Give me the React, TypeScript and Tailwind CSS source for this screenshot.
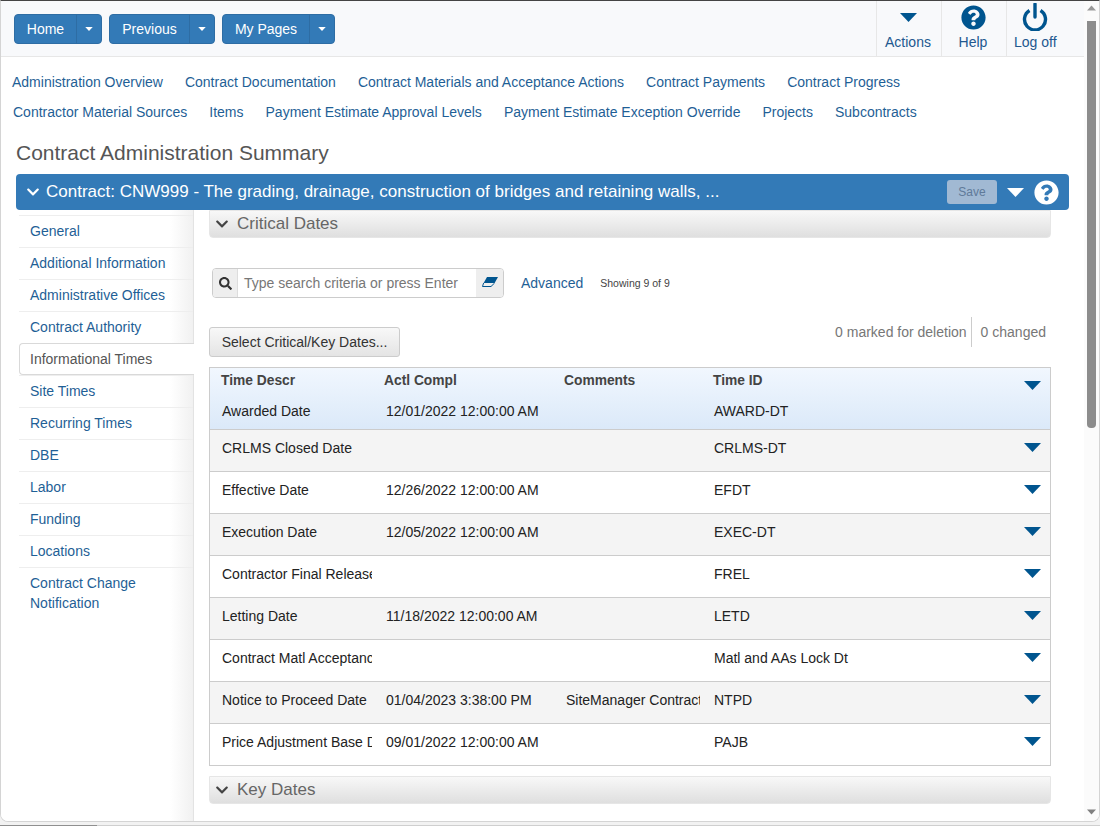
import React from "react";
import { FaChevronDown, FaQuestionCircle, FaSearch } from "react-icons/fa";

const navButtons = [
  { label: "Home", main: "w-[62px]" },
  { label: "Previous", main: "w-[80px]" },
  { label: "My Pages", main: "w-[87px]" },
];

const linkRows = [
  { cls: "pl-[11px]", links: ["Administration Overview", "Contract Documentation", "Contract Materials and Acceptance Actions", "Contract Payments", "Contract Progress"] },
  { cls: "pl-3", links: ["Contractor Material Sources", "Items", "Payment Estimate Approval Levels", "Payment Estimate Exception Override", "Projects", "Subcontracts"] },
];

const sideItems = [
  "General",
  "Additional Information",
  "Administrative Offices",
  "Contract Authority",
  "Informational Times",
  "Site Times",
  "Recurring Times",
  "DBE",
  "Labor",
  "Funding",
  "Locations",
  "Contract Change Notification",
];

const rows = [
  { descr: "CRLMS Closed Date", compl: "", comments: "", id: "CRLMS-DT" },
  { descr: "Effective Date", compl: "12/26/2022 12:00:00 AM", comments: "", id: "EFDT" },
  { descr: "Execution Date", compl: "12/05/2022 12:00:00 AM", comments: "", id: "EXEC-DT" },
  { descr: "Contractor Final Release Date", compl: "", comments: "", id: "FREL" },
  { descr: "Letting Date", compl: "11/18/2022 12:00:00 AM", comments: "", id: "LETD" },
  { descr: "Contract Matl Acceptance Lock", compl: "", comments: "", id: "Matl and AAs Lock Dt" },
  { descr: "Notice to Proceed Date", compl: "01/04/2023 3:38:00 PM", comments: "SiteManager Contract Activated", id: "NTPD" },
  { descr: "Price Adjustment Base Date", compl: "09/01/2022 12:00:00 AM", comments: "", id: "PAJB" },
];

const Caret = ({ className }: { className: string }) => (
  <svg viewBox="0 0 17 9" className={className} fill="currentColor">
    <path d="M0 0h17L8.5 9z" />
  </svg>
);

const SectionBar = ({ title }: { title: string }) => (
  <div className="flex h-7 items-center rounded-b-[4px] border border-[#e6e6e6] bg-gradient-to-b from-[#f8f8f8] to-[#dfdfdf] pl-[5px] text-[17px] text-[#666]">
    <FaChevronDown className="mr-[8px] h-[14px] w-[14px] text-[#444]" />
    {title}
  </div>
);

export default function App() {
  return (
    <div className="h-[826px] w-[1100px] overflow-hidden bg-[#f2f2f2] font-['Liberation_Sans',Arial,sans-serif] text-sm text-[#333]">
      <div className="flex h-[822px] flex-col overflow-hidden rounded-b-[8px] border-x border-b border-t border-[#d4d4d4] border-t-[#444] bg-white">
        <div className="flex min-h-0 flex-1">
          <div className="flex w-[1083px] flex-col">
            {/* top bar */}
            <div className="flex h-[56px] items-stretch justify-between border-b border-[#e7e7e7] bg-[#f8f9fb]">
              <div className="flex items-center gap-[7px] pl-[13px]">
                {navButtons.map((b) => (
                  <div key={b.label} className="flex h-[30px] rounded-[4px] border border-[#2e6da4] bg-[#337ab7] text-white">
                    <div className={`${b.main} flex items-center justify-center border-r border-[#2e6da4]`}>{b.label}</div>
                    <div className="flex w-6 items-center justify-center">
                      <Caret className="h-[4px] w-[8px]" />
                    </div>
                  </div>
                ))}
              </div>
              <div className="flex text-[#22588f]">
                <div className="flex w-[65px] flex-col items-center border-l border-[#e7e7e7] pr-[2px] pt-[12px]">
                  <Caret className="h-[9px] w-[17px] text-[#00558f]" />
                  <span className="mt-[10px]">Actions</span>
                </div>
                <div className="flex w-[65px] flex-col items-center border-l border-[#e7e7e7] pr-[2px] pt-[4px]">
                  <FaQuestionCircle className="h-[25px] w-[25px] text-[#00558f]" />
                  <span className="mt-[2px]">Help</span>
                </div>
                <div className="flex w-[78px] flex-col items-start border-l border-[#e7e7e7] pl-[7px] pt-[2px]">
                  <svg viewBox="0 0 26 28" className="ml-[8px] h-[28px] w-[26px] text-[#00558f]" fill="none" stroke="currentColor" strokeWidth="3.4">
                    <path d="M7.5 7.5a10.5 10.5 0 1 0 11 0" />
                    <path d="M13 1v13" strokeLinecap="round" />
                  </svg>
                  <span className="mt-[1px]">Log off</span>
                </div>
              </div>
            </div>

            {/* page links */}
            <div className="pt-[10px] text-[#1f5f96]">
              {linkRows.map((r) => (
                <div key={r.links[0]} className={`flex h-[30px] items-center gap-[22px] ${r.cls}`}>
                  {r.links.map((l) => (
                    <span key={l}>{l}</span>
                  ))}
                </div>
              ))}
            </div>

            <h1 className="pl-[15px] pt-[14px] text-[21px] leading-[24px] text-[#555]">Contract Administration Summary</h1>

            {/* contract bar */}
            <div className="ml-[15px] mt-[9px] flex h-9 w-[1053px] items-center rounded-[4px] bg-[#337ab7] pl-[10px] pr-[10px] text-white">
              <FaChevronDown className="mr-[6px] h-[14px] w-[14px]" />
              <span className="flex-1 text-[17px]">Contract: CNW999 - The grading, drainage, construction of bridges and retaining walls, ...</span>
              <div className="flex h-6 w-[50px] items-center justify-center rounded-[3px] bg-[#a1b9d3] text-xs text-[#5f7a99]">Save</div>
              <Caret className="ml-[10px] h-[9px] w-[17px]" />
              <FaQuestionCircle className="ml-[10px] h-[25px] w-[25px]" />
            </div>

            <div className="flex min-h-0 flex-1">
              {/* side menu */}
              <div className="w-[193px] shrink-0 border-r border-[#e3e3e3] bg-gradient-to-r from-white from-[88%] to-[#f1f1f1] pl-[18px] pt-[5px]">
                {sideItems.map((item) => {
                  const active = item === "Informational Times";
                  return active ? (
                    <div key={item} className="relative -mr-[1px] flex h-8 items-center rounded-l-[4px] border border-r-0 border-[#d9d9d9] bg-white pl-[10px] text-[#555]">
                      {item}
                    </div>
                  ) : (
                    <div key={item} className="border-t border-[#eeeeee] pb-[6px] pl-[11px] pr-4 pt-[5px] leading-5 text-[#1f5f96]">
                      {item}
                    </div>
                  );
                })}
              </div>

              {/* main panel */}
              <div className="w-[842px] shrink-0 pl-[15px] box-content">
                <SectionBar title="Critical Dates" />

                <div className="mt-[30px] flex h-[30px] items-center pl-[3px]">
                  <div className="flex h-[30px] w-[292px] overflow-hidden rounded-[4px] border border-[#ccc]">
                    <div className="flex w-[25px] items-center justify-center border-r border-[#ddd] bg-[#eee]">
                      <FaSearch className="h-[13px] w-[13px] text-[#333]" />
                    </div>
                    <div className="flex flex-1 items-center pl-[6px] text-[#777]">Type search criteria or press Enter</div>
                    <div className="flex w-[27px] items-center justify-center bg-[#eee] pb-[3px]">
                      <svg viewBox="0 0 16 10" className="h-[10px] w-[16px] text-[#00558f]">
                        <path d="M5 0h11l-3.4 6H1.6z" fill="currentColor" />
                        <path d="M1.6 6L0.5 9.5H9L12.6 6" fill="none" stroke="currentColor" strokeWidth="1" />
                      </svg>
                    </div>
                  </div>
                  <span className="ml-[17px] text-[#1f5f96]">Advanced</span>
                  <span className="ml-[17px] pt-[1px] text-[10.5px] text-[#444]">Showing 9 of 9</span>
                </div>

                <div className="mt-[19px] flex h-[40px] items-end justify-between">
                  <div className="flex h-[30px] w-[191px] items-center justify-center rounded-[3px] border border-[#ccc] bg-gradient-to-b from-[#f8f8f8] to-[#e4e4e4] text-[#333]">
                    Select Critical/Key Dates...
                  </div>
                  <div className="mb-[10px] flex h-[30px] items-center pr-[5px] text-[#777]">
                    <span>0 marked for deletion</span>
                    <span className="ml-[4px] mr-[5px] h-[30px] w-px bg-[#ccc]" />
                    <span className="pl-[4px]">0 changed</span>
                  </div>
                </div>

                <div className="mt-[10px] border border-[#ccc] text-[#222]">
                  <div className="relative h-[62px] border-b border-[#ccc] bg-gradient-to-b from-[#f1f7fe] to-[#dbe9f9]">
                    <div className="grid h-[27px] grid-cols-[162px_180px_148px_1fr] items-center pb-px text-[13.8px] font-bold text-[#444]">
                      <span className="pl-[11px]">Time Descr</span>
                      <span className="pl-3">Actl Compl</span>
                      <span className="pl-3">Comments</span>
                      <span className="pl-[13px]">Time ID</span>
                    </div>
                    <div className="grid h-[32px] grid-cols-[162px_180px_148px_1fr] items-center">
                      <span className="pl-3">Awarded Date</span>
                      <span className="pl-[14px]">12/01/2022 12:00:00 AM</span>
                      <span />
                      <span className="pl-[14px]">AWARD-DT</span>
                    </div>
                    <Caret className="absolute right-[9px] top-[13px] h-[9px] w-[17px] text-[#00558f]" />
                  </div>
                  {rows.map((r, i) => (
                    <div
                      key={r.id}
                      className={`grid grid-cols-[162px_180px_148px_1fr] items-start pt-[8px] ${i % 2 === 0 ? "bg-[#f4f4f4]" : "bg-white"} ${i < rows.length - 1 ? "h-[42px] border-b border-[#ccc]" : "h-[41px]"}`}
                    >
                      <span className="overflow-hidden whitespace-nowrap pl-3">{r.descr}</span>
                      <span className="pl-[14px]">{r.compl}</span>
                      <span className="overflow-hidden whitespace-nowrap pl-[14px]">{r.comments}</span>
                      <div className="flex items-start justify-between pl-[14px] pr-[9px]">
                        <span>{r.id}</span>
                        <Caret className="mt-[5px] h-[9px] w-[17px] text-[#00558f]" />
                      </div>
                    </div>
                  ))}
                </div>

                <div className="mt-[10px]">
                  <SectionBar title="Key Dates" />
                </div>
              </div>
            </div>
          </div>

          {/* scrollbar */}
          <div className="flex w-[15px] flex-col items-center bg-[#fbfbfb] pt-[4px] pb-[6px]">
            <Caret className="h-[6px] w-[9px] rotate-180 text-[#999]" />
            <div className="mt-[10px] h-[407px] w-[9px] rounded-b-[4px] bg-[#8c8c8c]" />
            <div className="flex-1" />
            <Caret className="h-[6px] w-[9px] text-[#808080]" />
          </div>
        </div>
      </div>
      <div className="mt-[3px] flex h-px">
        <div className="w-[97px] bg-[#8f8f8f]" />
        <div className="flex-1 bg-[#cfcfcf]" />
      </div>
    </div>
  );
}
